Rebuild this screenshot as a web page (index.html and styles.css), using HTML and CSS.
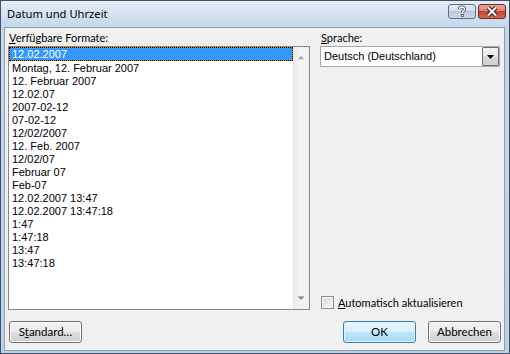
FILE: index.html
```html
<!DOCTYPE html>
<html lang="de">
<head>
<meta charset="utf-8">
<title>Datum und Uhrzeit</title>
<link rel="stylesheet" href="styles.css">
</head>
<body>
<div class="window">
  <div class="titlebar">
    <span class="title">Datum und Uhrzeit</span>
    <div class="tb-buttons">
      <span class="tb-btn help">
        <svg width="26" height="13" viewBox="0 0 26 13">
          <path d="M10.5 4.2 Q10.5 2 13 2 Q15.6 2 15.6 4.3 Q15.6 5.6 14 6.4 Q13.4 6.8 13.4 7.8" fill="none" stroke="#3b4a5c" stroke-width="3"/>
          <path d="M10.5 4.2 Q10.5 2 13 2 Q15.6 2 15.6 4.3 Q15.6 5.6 14 6.4 Q13.4 6.8 13.4 7.8" fill="none" stroke="#ffffff" stroke-width="1.4"/>
          <rect x="12" y="9" width="2.8" height="2.8" fill="#3b4a5c"/>
          <rect x="12.7" y="9.7" width="1.4" height="1.4" fill="#ffffff"/>
        </svg>
      </span>
      <span class="tb-btn close">
        <svg width="26" height="13" viewBox="0 0 26 13">
          <path d="M9 2.5 L17 10.5 M17 2.5 L9 10.5" stroke="#4a1b14" stroke-width="4"/>
          <path d="M9 2.5 L17 10.5 M17 2.5 L9 10.5" stroke="#ffffff" stroke-width="2"/>
        </svg>
      </span>
    </div>
  </div>
  <div class="client">
    <div class="main">
      <div class="col col-left">
        <div class="label"><u>V</u>erfügbare Formate:</div>
        <div class="listbox">
          <ul class="items">
            <li class="item selected">12.02.2007</li>
            <li class="item">Montag, 12. Februar 2007</li>
            <li class="item">12. Februar 2007</li>
            <li class="item">12.02.07</li>
            <li class="item">2007-02-12</li>
            <li class="item">07-02-12</li>
            <li class="item">12/02/2007</li>
            <li class="item">12. Feb. 2007</li>
            <li class="item">12/02/07</li>
            <li class="item">Februar 07</li>
            <li class="item">Feb-07</li>
            <li class="item">12.02.2007 13:47</li>
            <li class="item">12.02.2007 13:47:18</li>
            <li class="item">1:47</li>
            <li class="item">1:47:18</li>
            <li class="item">13:47</li>
            <li class="item">13:47:18</li>
          </ul>
          <div class="vscroll">
            <svg class="arr" width="16" height="6" viewBox="0 0 16 6"><path d="M5 5 L8 2 L11 5 Z" fill="#9d9d9d"/><path d="M5.5 5 L10.5 5" stroke="#c4c4c4" stroke-width="1"/></svg>
            <svg class="arr" width="16" height="6" viewBox="0 0 16 6"><path d="M5 1 L11 1 L8 4 Z" fill="#8d8d8d"/><path d="M5 0.5 L11 0.5" stroke="#b0b0b0" stroke-width="1"/></svg>
          </div>
        </div>
      </div>
      <div class="col col-right">
        <div class="label"><u>S</u>prache:</div>
        <div class="combo">
          <span class="combo-text">Deutsch (Deutschland)</span>
          <span class="combo-btn">
            <svg width="7" height="4" viewBox="0 0 7 4"><path d="M0 0 L7 0 L3.5 4 Z" fill="#000"/></svg>
          </span>
        </div>
        <div class="check">
          <span class="box"></span>
          <span class="check-text"><u>A</u>utomatisch aktualisieren</span>
        </div>
      </div>
    </div>
    <div class="buttons">
      <button class="btn btn-standard">S<u>t</u>andard…</button>
      <span class="spacer"></span>
      <button class="btn btn-default">OK</button>
      <button class="btn">Abbrechen</button>
    </div>
  </div>
</div>
</body>
</html>
```

FILE: styles.css
```css
* { box-sizing: border-box; }

html, body {
  margin: 0;
  padding: 0;
  background: #ffffff;
}

.window {
  width: 510px;
  height: 354px;
  border: 1px solid #3e5166;
  background: linear-gradient(to bottom, #e4edf7 0px, #d3e1f0 14px, #c6d7ea 26px, #bcd0e6 354px);
  display: flex;
  flex-direction: column;
  font-family: Lato, "Noto Sans", sans-serif;
}

.titlebar {
  height: 26px;
  flex: none;
  display: flex;
  align-items: flex-start;
  justify-content: space-between;
  padding-left: 6px;
}

.title {
  font-family: "Noto Sans", sans-serif;
  font-size: 11.2px;
  line-height: 14px;
  margin-top: 6px;
  color: #000;
}

.tb-buttons {
  display: flex;
  gap: 2px;
  margin-top: 3px;
  margin-right: 3px;
}

.tb-btn {
  width: 28px;
  height: 15px;
  border: 1px solid #5f6f82;
  border-radius: 3px;
  display: flex;
  align-items: center;
  justify-content: center;
}

.tb-btn svg { display: block; }

.help {
  background: linear-gradient(to bottom, #e7eef6 0%, #d2dfec 45%, #b9cade 50%, #c9d8e8 100%);
}

.close {
  border-color: #6b2a22;
  background: linear-gradient(to bottom, #e9a99c 0%, #d8816f 45%, #c1442e 50%, #cf6b52 100%);
}

.client {
  flex: 1;
  margin: 0 4px 2px 3px;
  border: 1px solid #8b9eb3;
  background: #f0f0f0;
  padding: 3px 3px 0 3px;
  display: flex;
  flex-direction: column;
}

.main {
  display: flex;
  gap: 10px;
  height: 279px;
}

.col {
  display: flex;
  flex-direction: column;
}

.col-left { width: 302px; }
.col-right { width: 180px; }

.label {
  font-size: 11px;
  line-height: 13px;
  height: 13px;
  margin-bottom: 2px;
  color: #000;
  padding-left: 1px;
}

.listbox {
  height: 264px;
  border: 1px solid #828790;
  background: #ffffff;
  display: flex;
}

.items {
  list-style: none;
  margin: 0;
  padding: 0;
  width: 284px;
  font-family: "Liberation Sans", Arial, sans-serif;
  font-size: 11px;
}

.item {
  height: 13px;
  line-height: 15px;
  padding-left: 3px;
  color: #000;
  white-space: nowrap;
}

.item.selected {
  height: 14px;
  color: #ffffff;
  border: 1px dotted #000000;
  background: linear-gradient(#3399ff, #3399ff) padding-box, #e58a1f border-box;
  line-height: 13px;
  padding-left: 2px;
}

.vscroll {
  width: 16px;
  border-left: 1px solid #e6e6e6;
  background: linear-gradient(to right, #ececec, #f4f4f4 40%, #efefef);
  display: flex;
  flex-direction: column;
  justify-content: space-between;
  padding: 7px 0 7px 0;
}

.arr { display: block; margin-left: -1px; }

.combo {
  height: 21px;
  border: 1px solid #a4a7ad;
  background: #ffffff;
  display: flex;
  align-items: stretch;
}

.combo-text {
  flex: 1;
  font-family: "Liberation Sans", Arial, sans-serif;
  font-size: 11px;
  line-height: 19px;
  padding-left: 3px;
  color: #000;
}

.combo-btn {
  width: 17px;
  border: 1px solid #707070;
  border-radius: 1px;
  background: linear-gradient(to bottom, #f4f4f4 0%, #e9e9e9 48%, #d9d9d9 52%, #d0d0d0 100%);
  display: flex;
  align-items: center;
  justify-content: center;
}

.combo-btn svg { display: block; }

.check {
  margin-top: auto;
  margin-bottom: 1px;
  display: flex;
  align-items: center;
  gap: 4px;
  padding-left: 1px;
  height: 14px;
}

.box {
  width: 13px;
  height: 13px;
  border: 1px solid #8e8f8f;
  background: linear-gradient(135deg, #dcdcdc, #f6f6f6);
  box-shadow: inset 0 0 0 1px #f4f4f4;
}

.check-text {
  font-size: 11px;
  line-height: 13px;
  color: #000;
}

.buttons {
  display: flex;
  margin-top: 11px;
  height: 22px;
}

.spacer { flex: 1; }

.btn {
  width: 73px;
  height: 22px;
  margin: 0;
  padding: 0;
  border: 1px solid #707070;
  border-radius: 3px;
  background: linear-gradient(to bottom, #f2f2f2 0%, #ebebeb 48%, #dddddd 52%, #cfcfcf 100%);
  box-shadow: inset 0 0 0 1px #fcfcfc;
  font-family: Lato, "Noto Sans", sans-serif;
  font-size: 11.5px;
  line-height: 18px;
  color: #000;
}

.btn-standard { margin-left: 1px; }

.btn-default {
  margin-right: 12px;
  border-color: #3c7fb1;
  background: linear-gradient(to bottom, #eaf6fd 0%, #d9f0fc 48%, #bee6fd 52%, #a7d9f5 100%);
  box-shadow: inset 0 0 0 1px #ddf4fe;
}
```
